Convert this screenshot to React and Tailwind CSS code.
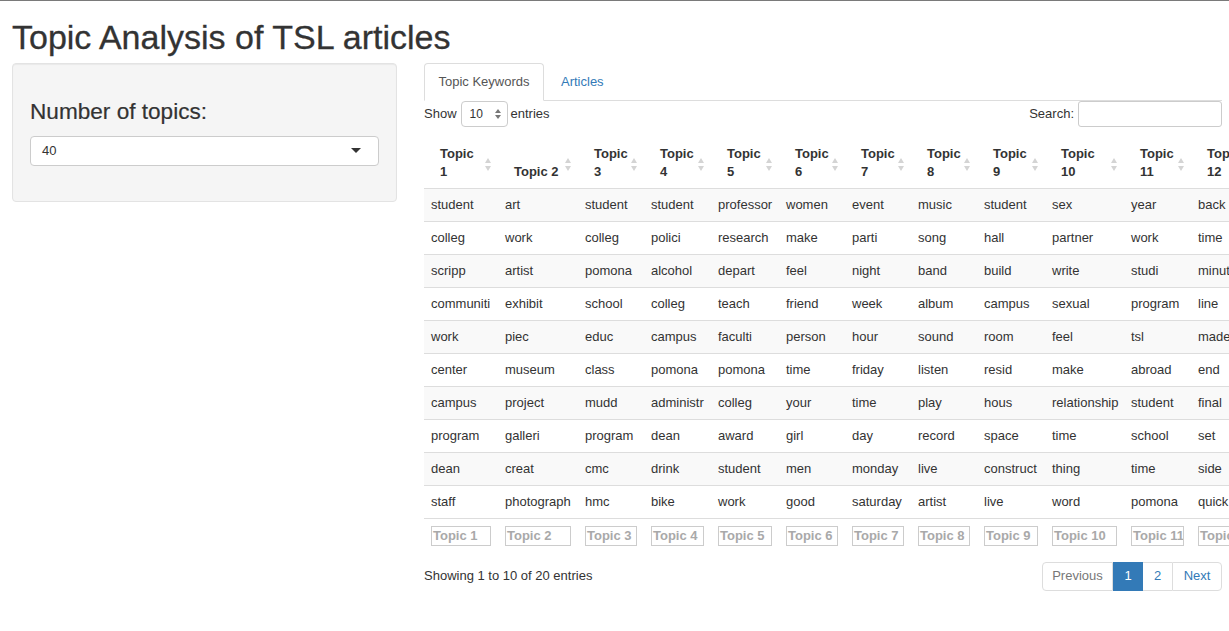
import React from "react";

const cols = [
  { w: 74, h: ["Topic", "1"], words: ["student", "colleg", "scripp", "communiti", "work", "center", "campus", "program", "dean", "staff"] },
  { w: 80, h: ["Topic 2"], words: ["art", "work", "artist", "exhibit", "piec", "museum", "project", "galleri", "creat", "photograph"] },
  { w: 66, h: ["Topic", "3"], words: ["student", "colleg", "pomona", "school", "educ", "class", "mudd", "program", "cmc", "hmc"] },
  { w: 67, h: ["Topic", "4"], words: ["student", "polici", "alcohol", "colleg", "campus", "pomona", "administr", "dean", "drink", "bike"] },
  { w: 68, h: ["Topic", "5"], words: ["professor", "research", "depart", "teach", "faculti", "pomona", "colleg", "award", "student", "work"] },
  { w: 66, h: ["Topic", "6"], words: ["women", "make", "feel", "friend", "person", "time", "your", "girl", "men", "good"] },
  { w: 66, h: ["Topic", "7"], words: ["event", "parti", "night", "week", "hour", "friday", "time", "day", "monday", "saturday"] },
  { w: 66, h: ["Topic", "8"], words: ["music", "song", "band", "album", "sound", "listen", "play", "record", "live", "artist"] },
  { w: 68, h: ["Topic", "9"], words: ["student", "hall", "build", "campus", "room", "resid", "hous", "space", "construct", "live"] },
  { w: 79, h: ["Topic", "10"], words: ["sex", "partner", "write", "sexual", "feel", "make", "relationship", "time", "thing", "word"] },
  { w: 67, h: ["Topic", "11"], words: ["year", "work", "studi", "program", "tsl", "abroad", "student", "school", "time", "pomona"] },
  { w: 70, h: ["Topic", "12"], words: ["back", "time", "minut", "line", "made", "end", "final", "set", "side", "quick"] },
];

const totalW = cols.reduce((a, c) => a + c.w, 0);

function SortIcon() {
  return (
    <svg width="6" height="13" viewBox="0 0 6 13" className="absolute right-[7px] top-[18px]">
      <polygon points="0,5 3,0 6,5" fill="#d4d4d4" />
      <polygon points="0,8 3,13 6,8" fill="#d4d4d4" />
    </svg>
  );
}

export default function App() {
  return (
    <div
      className="w-[1229px] h-[631px] overflow-hidden bg-white text-[#333]"
      style={{ fontFamily: '"Liberation Sans", Arial, Helvetica, sans-serif' }}
    >
      <div className="h-[1px] bg-[#7a7a7a]" />
      <div className="pt-[18px] pl-[12px]">
        <h1 className="text-[34px] leading-[37px] font-normal text-[#333] [-webkit-text-stroke:0.3px_#333]">
          Topic Analysis of TSL articles
        </h1>
      </div>
      <div className="flex mt-[7px] pl-[12px]">
        {/* Sidebar */}
        <div className="w-[385px] h-[139px] shrink-0 rounded-[4px] border border-[#e3e3e3] bg-[#f5f5f5] shadow-[inset_0_1px_1px_rgba(0,0,0,0.05)] px-[17px] pt-[35px]">
          <div className="text-[22.6px] leading-[26px] text-[#333] [-webkit-text-stroke:0.2px_#333]">Number of topics:</div>
          <div className="mt-[11px] h-[30px] rounded-[4px] border border-[#ccc] bg-white flex items-center justify-between pl-[11px] pr-[17px]">
            <span className="text-[13px]">40</span>
            <svg width="10" height="6" viewBox="0 0 10 6">
              <polygon points="0,0 10,0 5,5" fill="#333" />
            </svg>
          </div>
        </div>

        {/* Main */}
        <div className="ml-[27px] w-[798px] shrink-0">
          {/* Tabs */}
          <div className="flex h-[38px] border-b border-[#ddd]">
            <div className="w-[120px] h-[38px] border border-[#ddd] border-b-white rounded-t-[4px] bg-white flex items-center justify-center text-[13px] text-[#555]">
              Topic Keywords
            </div>
            <div className="ml-[2px] px-[15px] flex items-center text-[13px] text-[#337ab7]">Articles</div>
          </div>
          {/* Controls */}
          <div className="flex items-center justify-between h-[26px] text-[13px]">
            <div className="flex items-center">
              <span>Show</span>
              <div className="ml-[4px] w-[47px] h-[26px] rounded-[4px] border border-[#ccc] flex items-center justify-between pl-[8px] pr-[6px]">
                <span className="text-[12px]">10</span>
                <svg width="6" height="10" viewBox="0 0 6 10">
                  <polygon points="0,4 3,0 6,4" fill="#777" />
                  <polygon points="0,6 3,10 6,6" fill="#777" />
                </svg>
              </div>
              <span className="ml-[3px]">entries</span>
            </div>
            <div className="flex items-center">
              <span>Search:</span>
              <div className="ml-[4px] w-[144px] h-[26px] rounded-[3px] border border-[#ccc] bg-white" />
            </div>
          </div>

          {/* Table */}
          <div className="mt-[13px]" style={{ width: totalW }}>
            <table className="table-fixed border-collapse text-[13px]" style={{ width: totalW }}>
              <colgroup>
                {cols.map((c, i) => (
                  <col key={i} style={{ width: c.w }} />
                ))}
              </colgroup>
              <thead>
                <tr className="h-[48px] border-b border-[#ddd]">
                  {cols.map((c, i) => (
                    <th
                      key={i}
                      className="relative align-bottom text-left font-bold pl-[16px] pb-[7px] pt-[5px] leading-[18px] whitespace-nowrap overflow-hidden"
                    >
                      {c.h.map((l, j) => (
                        <div key={j}>{l}</div>
                      ))}
                      <SortIcon />
                    </th>
                  ))}
                </tr>
              </thead>
              <tbody>
                {Array.from({ length: 10 }).map((_, r) => (
                  <tr
                    key={r}
                    className={`h-[33px] ${r > 0 ? "border-t border-[#ddd]" : ""} ${r % 2 === 0 ? "bg-[#f9f9f9]" : "bg-white"}`}
                  >
                    {cols.map((c, i) => (
                      <td key={i} className="pl-[7px] pr-0 whitespace-nowrap overflow-hidden align-middle">
                        {c.words[r]}
                      </td>
                    ))}
                  </tr>
                ))}
              </tbody>
              <tfoot>
                <tr className="h-[36px] border-t border-[#ddd]">
                  {cols.map((c, i) => (
                    <td key={i} className="pl-[7px] pt-[7px] pb-[8px] align-top">
                      <div
                        className="h-[20px] border border-[#ccc] bg-white text-[13px] font-bold text-[#a9a9a9] leading-[18px] pl-[1px] whitespace-nowrap overflow-hidden"
                        style={{ width: c.w - 14 }}
                      >
                        Topic {i + 1}
                      </div>
                    </td>
                  ))}
                </tr>
              </tfoot>
            </table>
          </div>

          {/* Bottom */}
          <div className="mt-[7px] flex items-center justify-between text-[13px]">
            <div>Showing 1 to 10 of 20 entries</div>
            <div className="flex h-[29px]">
              <div className="w-[71px] flex items-center justify-center border border-[#ddd] rounded-l-[4px] text-[#777]">Previous</div>
              <div className="w-[30px] flex items-center justify-center border border-[#337ab7] bg-[#337ab7] text-white">1</div>
              <div className="w-[29px] flex items-center justify-center border-y border-[#ddd] text-[#337ab7]">2</div>
              <div className="w-[50px] flex items-center justify-center border border-[#ddd] rounded-r-[4px] text-[#337ab7]">Next</div>
            </div>
          </div>
        </div>
      </div>
    </div>
  );
}
